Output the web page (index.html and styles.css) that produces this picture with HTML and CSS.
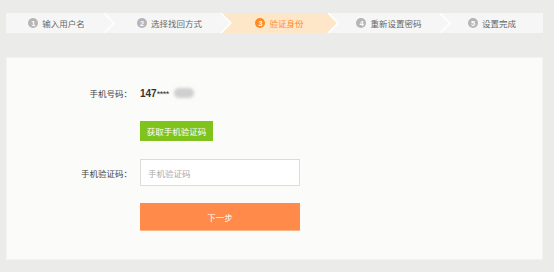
FILE: index.html
```html
<!DOCTYPE html>
<html lang="zh-CN">

<head>
    <meta charset="UTF-8">
    <meta name="viewport" content="width=device-width, initial-scale=1.0">
    <title>找回密码 - 验证身份</title>
    <link rel="stylesheet" href="styles.css">
</head>

<body>
    <div class="page">
        <ol class="steps">
            <li class="step first"><span class="step-num">1</span>输入用户名</li>
            <li class="step second"><span class="step-num">2</span>选择找回方式</li>
            <li class="step active"><span class="step-num">3</span>验证身份</li>
            <li class="step"><span class="step-num">4</span>重新设置密码</li>
            <li class="step last"><span class="step-num">5</span>设置完成</li>
        </ol>

        <div class="verify-card">
            <div class="form-row row-phone">
                <span class="form-label">手机号码：</span>
                <span class="phone">147<span class="mask">****</span><span class="blur"></span></span>
            </div>

            <div class="form-row row-send">
                <span class="form-label"></span>
                <button class="send-button">获取手机验证码</button>
            </div>

            <div class="form-row row-code">
                <span class="form-label">手机验证码：</span>
                <input class="code-input" type="text" placeholder="手机验证码">
            </div>

            <div class="form-row row-next">
                <span class="form-label"></span>
                <button class="next-button">下一步</button>
            </div>
        </div>
    </div>
</body>

</html>
```

FILE: styles.css
```css
body {
    margin: 0;
    background: #ebebea;
    font-family: "Noto Sans CJK SC", "Liberation Sans", sans-serif;
    color: #555;
}

.page {
    width: 537px;
    margin-left: 6px;
    padding-top: 13px;
}

/* step bar */
.steps {
    display: flex;
    margin: 0;
    padding: 0;
    list-style: none;
    background: #fff;
    height: 20px;
}

.step {
    width: 120px;
    flex-shrink: 0;
    display: flex;
    align-items: center;
    justify-content: center;
    gap: 4px;
    height: 20px;
    margin-left: -8px;
    background: #f6f6f6;
    color: #666;
    font-size: 8.5px;
    clip-path: polygon(0 0, calc(100% - 10px) 0, 100% 50%, calc(100% - 10px) 100%, 0 100%, 10px 50%);
}

.step.first {
    width: 107px;
    margin-left: 0;
    padding-right: 6px;
    box-sizing: border-box;
    clip-path: polygon(0 0, calc(100% - 10px) 0, 100% 50%, calc(100% - 10px) 100%, 0 100%);
}

.step.second {
    width: 125px;
    padding-left: 4px;
    box-sizing: border-box;
}

.step.active {
    width: 115px;
    background: #fee6c9;
    color: #ff8c2e;
}

.step.last {
    width: auto;
    flex: 1;
    clip-path: polygon(0 0, 100% 0, 100% 100%, 0 100%, 10px 50%);
}

.step-num {
    display: inline-flex;
    align-items: center;
    justify-content: center;
    width: 10px;
    height: 10px;
    border-radius: 50%;
    background: #b5b5b5;
    color: #fff;
    font-family: "Liberation Sans", sans-serif;
    font-size: 7.5px;
    font-weight: 700;
}

.step.active .step-num {
    background: #ff8a1f;
}

/* card */
.verify-card {
    margin-top: 24px;
    height: 203px;
    background: #fbfbf9;
    border: 1px solid #f3f3f1;
    padding-top: 25px;
    box-sizing: border-box;
}

.form-row {
    display: flex;
    align-items: center;
    gap: 8px;
}

.form-label {
    width: 125px;
    flex-shrink: 0;
    text-align: right;
    font-size: 8.5px;
    color: #444;
}

.row-phone {
    height: 20px;
}

.phone {
    display: flex;
    align-items: center;
    font-family: "Liberation Sans", sans-serif;
    font-size: 10px;
    font-weight: 700;
    color: #333;
}

.mask {
    font-size: 9px;
    font-weight: 400;
    align-self: flex-start;
    margin-top: 1px;
    letter-spacing: -0.5px;
}

.blur {
    display: inline-block;
    width: 20px;
    height: 10px;
    margin-left: 5px;
    border-radius: 5px;
    background: #cfcfcf;
    filter: blur(1.5px);
}

.row-send {
    margin-top: 18px;
}

.send-button {
    height: 20px;
    width: 73px;
    padding: 0;
    border: none;
    background: #80c31c;
    color: #fff;
    font-family: inherit;
    font-size: 8.5px;
}

.row-code {
    margin-top: 18px;
}

.code-input {
    width: 160px;
    height: 27px;
    box-sizing: border-box;
    border: 1px solid #dcdcdc;
    padding: 0 7px;
    background: #fff;
    font-family: inherit;
    font-size: 8.5px;
    outline: none;
}

.code-input::placeholder {
    color: #aaa;
}

.row-next {
    margin-top: 17px;
}

.next-button {
    width: 160px;
    height: 28px;
    padding: 0;
    border: none;
    border-bottom: 1px solid #ffb487;
    background: #ff8a4a;
    color: #fff;
    font-family: inherit;
    font-size: 8.5px;
}
```
